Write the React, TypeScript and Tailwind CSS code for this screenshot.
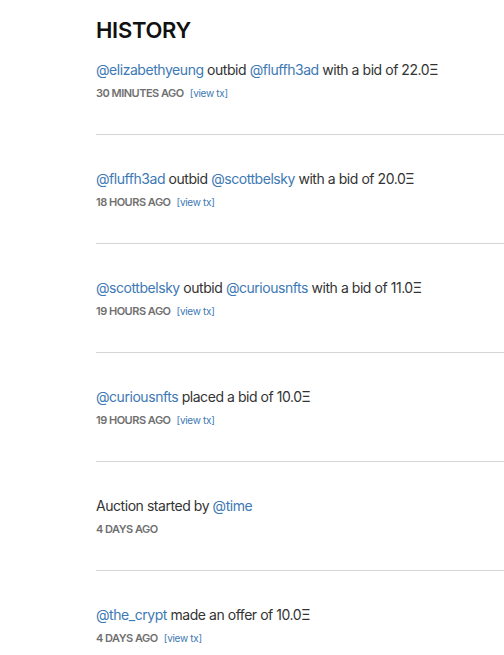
import React from 'react';

type Part = { t: string; link?: boolean };

interface Entry {
  parts: Part[];
  time: string;
  tx?: boolean;
}

const u = (t: string): Part => ({ t, link: true });
const s = (t: string): Part => ({ t });

const entries: Entry[] = [
  { parts: [u('@elizabethyeung'), s(' outbid '), u('@fluffh3ad'), s(' with a bid of 22.0Ξ')], time: '30 MINUTES AGO', tx: true },
  { parts: [u('@fluffh3ad'), s(' outbid '), u('@scottbelsky'), s(' with a bid of 20.0Ξ')], time: '18 HOURS AGO', tx: true },
  { parts: [u('@scottbelsky'), s(' outbid '), u('@curiousnfts'), s(' with a bid of 11.0Ξ')], time: '19 HOURS AGO', tx: true },
  { parts: [u('@curiousnfts'), s(' placed a bid of 10.0Ξ')], time: '19 HOURS AGO', tx: true },
  { parts: [s('Auction started by '), u('@time')], time: '4 DAYS AGO' },
  { parts: [u('@the_crypt'), s(' made an offer of 10.0Ξ')], time: '4 DAYS AGO', tx: true },
];

const Row: React.FC<{ entry: Entry; first: boolean }> = ({ entry, first }) => (
  <div className={first ? 'pb-[34px]' : 'border-t border-[#d4d4d4] pt-[35px] pb-[34px]'}>
    <p className="text-[14px] leading-[18px] tracking-[-0.45px] text-[#333]">
      {entry.parts.map((p, i) =>
        p.link ? (
          <a key={i} className="text-[#3d79b4]">{p.t}</a>
        ) : (
          <span key={i}>{p.t}</span>
        )
      )}
    </p>
    <div className="mt-[7px] flex items-center gap-[6px] h-[14px]">
      <span className="text-[11px] font-semibold tracking-[-0.5px] text-[#707070]">{entry.time}</span>
      {entry.tx && <a className="text-[10px] tracking-[-0.3px] text-[#3d79b4]">[view tx]</a>}
    </div>
  </div>
);

export default function App() {
  return (
    <div className="min-h-screen bg-white pl-[96px] pt-[17px] overflow-hidden" style={{ fontFamily: 'Inter, "Liberation Sans", sans-serif' }}>
      <h2 className="text-[22px] leading-[26px] font-semibold tracking-[-0.3px] text-[#111]">HISTORY</h2>
      <div className="mt-[18px]">
        {entries.map((e, i) => (
          <Row key={i} entry={e} first={i === 0} />
        ))}
      </div>
    </div>
  );
}
